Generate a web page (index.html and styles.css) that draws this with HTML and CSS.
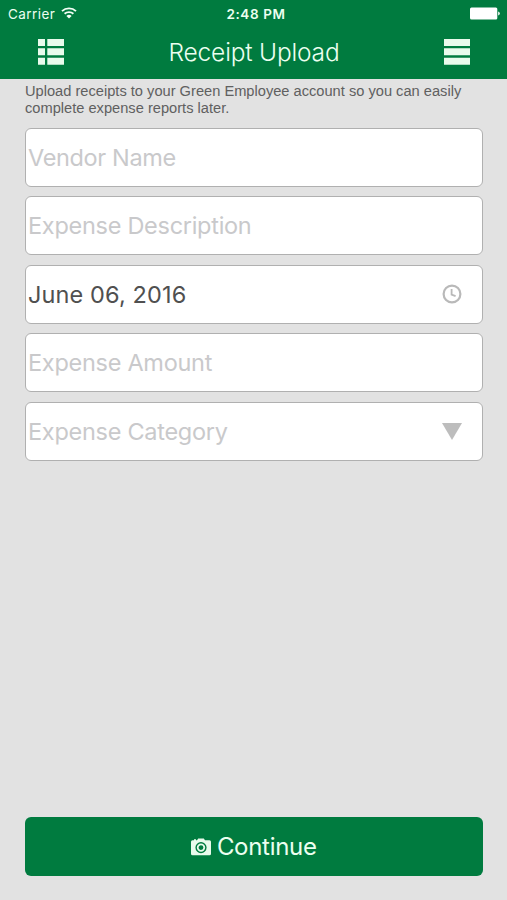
FILE: index.html
```html
<!DOCTYPE html>
<html lang="en">
<head>
<meta charset="utf-8">
<title>Receipt Upload</title>
<link rel="stylesheet" href="styles.css">
</head>
<body>
<header class="header">
  <div class="status">
    <div class="carrier"><span>Carrier</span>
      <svg class="wifi" width="16" height="12" viewBox="0 0 16 12" fill="none" stroke="#f4fff6" stroke-width="1.9"><path d="M1 4.1a10.3 10.3 0 0 1 14 0M3.6 6.8a6.5 6.5 0 0 1 8.8 0"/><path d="M8 11.6 5.4 9a3.8 3.8 0 0 1 5.2 0Z" fill="#f4fff6" stroke="none"/></svg>
    </div>
    <span class="time">2:48 PM</span>
    <svg class="battery" width="30" height="13" viewBox="0 0 30 13" fill="#fff"><rect x="0" y="0.5" width="27.3" height="12" rx="1.5"/><path d="M28.2 4.6q1.6.4 1.6 1.9t-1.6 1.9Z"/></svg>
  </div>
  <div class="nav">
    <svg width="26" height="26" viewBox="0 0 26 26" fill="#e9fbec"><path d="M0 0h7v7H0zM9.3 0H26v7H9.3zM0 9.3h7v7H0zM9.3 9.3H26v7H9.3zM0 18.7h7v7H0zM9.3 18.7H26v7H9.3z"/></svg>
    <h1 class="title">Receipt Upload</h1>
    <svg width="26" height="26" viewBox="0 0 26 26" fill="#e9fbec"><path d="M0 0h26v7H0zM0 9.3h26v7H0zM0 18.7h26v7H0z"/></svg>
  </div>
</header>
<main class="main">
  <p class="intro"><span class="line">Upload receipts to your Green Employee account so you can easily</span> <span class="line">complete expense reports later.</span></p>
  <div class="fields">
    <div class="field"><span class="vendor">Vendor Name</span></div>
    <div class="field"><span>Expense Description</span></div>
    <div class="field filled"><span class="date">June 06, 2016</span>
      <svg width="20" height="20" viewBox="0 0 20 20" fill="none" stroke="#b9b9b9"><circle cx="10" cy="10" r="8.4" stroke-width="2.2"/><path d="M9.6 5v5.6l4 1.6" stroke-width="1.8"/></svg>
    </div>
    <div class="field"><span>Expense Amount</span></div>
    <div class="field"><span>Expense Category</span>
      <svg width="20" height="17" viewBox="0 0 20 17" fill="#bdbdbd"><path d="M0 0h20L10 17z"/></svg>
    </div>
  </div>
  <div class="button">
    <svg width="20" height="18" viewBox="0 0 20 18"><path fill="#e9fbec" fill-rule="evenodd" d="M1.5 2.2H3V1.200H5V2.200H6L7.200.4h5.600L14 2.200h4.500Q20 2.200 20 3.700v12Q20 17.200 18.500 17.200h-17Q0 17.200 0 15.700v-12Q0 2.200 1.500 2.200ZM10 4a5.600 5.600 0 1 0 0 11.200A5.600 5.600 0 1 0 10 4Z"/><circle cx="10" cy="9.600" r="3.300" fill="none" stroke="#e9fbec" stroke-width="1.800"/></svg>
    <span>Continue</span>
  </div>
</main>
</body>
</html>
```
FILE: styles.css
```css
* { box-sizing: border-box; }
body {
  margin: 0;
  height: 900px;
  display: flex;
  flex-direction: column;
  background: #e2e2e2;
  font-family: Inter, "Liberation Sans", sans-serif;
  overflow: hidden;
}
svg { display: block; flex: none; }
span { white-space: nowrap; }
.header { height: 79px; background: #007b3f; color: #ecfff0; }
.status {
  height: 28px;
  padding: 0 7px 0 8px;
  display: grid;
  grid-template-columns: 1fr auto 1fr;
  align-items: center;
  font-size: 13.5px;
  line-height: 28px;
}
.carrier { display: flex; align-items: center; gap: 6px; letter-spacing: 0.42px; }
.wifi { margin-top: -3px; }
.time { font-weight: 600; letter-spacing: 0.6px; padding-left: 4px; }
.battery { justify-self: end; margin-top: -1px; }
.nav {
  height: 48px;
  padding: 0 37px 0 38px;
  display: flex;
  align-items: center;
  justify-content: space-between;
}
.title { margin: 0; font-size: 24.5px; font-weight: 300; line-height: 48px; letter-spacing: -0.18px; }
.main { flex: 1; display: flex; flex-direction: column; padding: 4px 24.5px 24px 25px; }
.intro {
  margin: 0;
  color: #606060;
  font: 14.65px/16.5px "Liberation Sans", sans-serif;
}
.line { display: block; }
.fields { margin-top: 11.5px; display: flex; flex-direction: column; gap: 9.5px; }
.field {
  height: 59px;
  padding: 0 19.5px 0 2px;
  display: flex;
  align-items: center;
  justify-content: space-between;
  background: #fff;
  border: 1.5px solid #b0b0b0;
  border-radius: 6px;
  color: #c9c9cb;
  font-size: 23.5px;
  letter-spacing: -0.28px;
}
.vendor { letter-spacing: -0.35px; }
.filled { color: #505050; }
.date { letter-spacing: 0.12px; }
.button {
  height: 59px;
  margin-top: auto;
  display: flex;
  align-items: center;
  justify-content: center;
  gap: 6px;
  border-radius: 6px;
  background: #007b3f;
  color: #ecfff0;
  font-size: 24px;
  letter-spacing: -0.3px;
}
```
